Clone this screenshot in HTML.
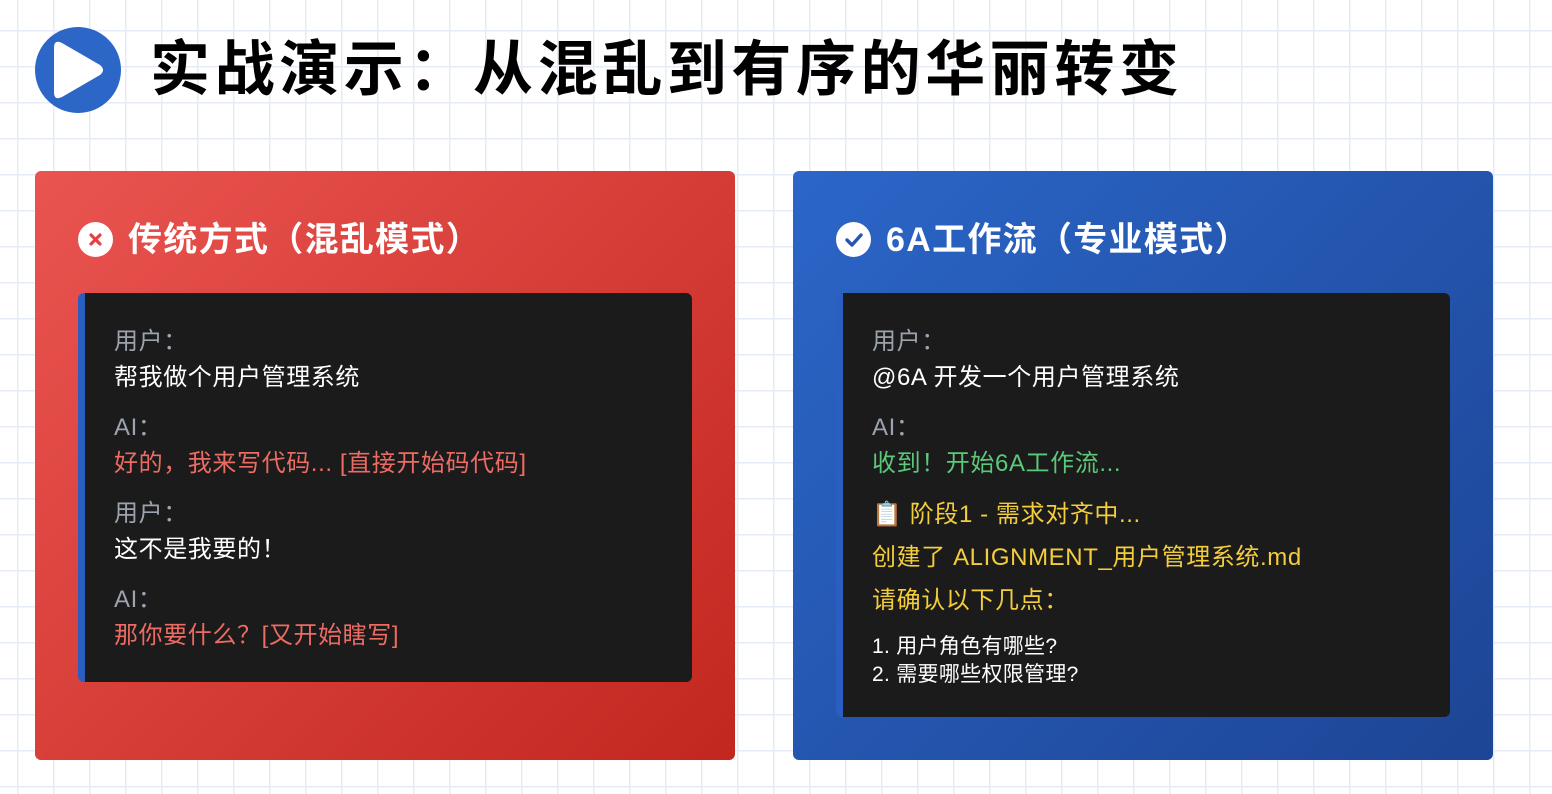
<!DOCTYPE html>
<html><head><meta charset="utf-8"><style>
*{margin:0;padding:0;box-sizing:border-box}
body{width:1552px;height:794px;overflow:hidden;position:relative;font-family:"Liberation Sans","Noto Sans CJK SC",sans-serif;
background-color:#fff;
background-image:linear-gradient(#e6ecf7 1.5px,transparent 1.5px),linear-gradient(90deg,#e6ecf7 1.5px,transparent 1.5px);
background-size:36px 36px;background-position:17px 30px}
.hicon{position:absolute;left:35px;top:27px;width:86px;height:86px;border-radius:50%;background:#2c66c6}
h1{position:absolute;left:150px;top:34px;font-size:60px;font-weight:700;line-height:72px;color:#000;letter-spacing:4.6px}
.card{position:absolute;top:171px;width:700px;height:589px;border-radius:6px}
.red{left:35px;background:linear-gradient(135deg,#ea5450,#c2271f)}
.blue{left:793px;background:linear-gradient(135deg,#2b66c8,#1d4595)}
.ct{position:absolute;font-size:34px;font-weight:700;color:#fff;line-height:44px;letter-spacing:1.3px}
.ci{position:absolute;left:43px;top:51px;width:35px;height:35px;border-radius:50%;background:#fff}
.box{position:absolute;left:43px;top:122px;width:614px;background:#1b1b1b;border-radius:6px;border-left:7px solid #2a5ec0}
.l{position:absolute;left:29px;font-size:24px;line-height:30px;white-space:nowrap;letter-spacing:0.6px}
.g{color:#9ca3af}.w{color:#fff}.r{color:#ec6b63}.gr{color:#5cc87a}.y{color:#f3cd3c}
.s{font-size:21px;color:#fff;letter-spacing:0.3px}
</style></head><body>
<div class="hicon"><svg width="86" height="86" viewBox="0 0 86 86"><path d="M65 38 L27 16 Q19 12 19 21 L19 65 Q19 74 27 70 L65 48 Q71 43 65 38Z" fill="#fff"/></svg></div>
<h1>实战演示：从混乱到有序的华丽转变</h1>

<div class="card red">
<div class="ci"><svg width="35" height="35"><path d="M13 13 L22 22 M22 13 L13 22" stroke="#e04640" stroke-width="3.2" stroke-linecap="round"/></svg></div>
<div class="ct" style="left:93px;top:47px">传统方式（混乱模式）</div>
<div class="box" style="height:389px">
<div class="l g" style="top:34px">用户：</div>
<div class="l w" style="top:70px">帮我做个用户管理系统</div>
<div class="l g" style="top:120px">AI：</div>
<div class="l r" style="top:156px">好的，我来写代码... [直接开始码代码]</div>
<div class="l g" style="top:206px">用户：</div>
<div class="l w" style="top:242px">这不是我要的！</div>
<div class="l g" style="top:292px">AI：</div>
<div class="l r" style="top:328px">那你要什么？[又开始瞎写]</div>
</div>
</div>

<div class="card blue">
<div class="ci"><svg width="35" height="35"><path d="M11 18 L16 23 L25 13" fill="none" stroke="#2456b4" stroke-width="3.4" stroke-linecap="round" stroke-linejoin="round"/></svg></div>
<div class="ct" style="left:93px;top:47px">6A工作流（专业模式）</div>
<div class="box" style="height:424px">
<div class="l g" style="top:34px">用户：</div>
<div class="l w" style="top:70px">@6A 开发一个用户管理系统</div>
<div class="l g" style="top:120px">AI：</div>
<div class="l gr" style="top:156px">收到！开始6A工作流...</div>
<div class="l y" style="top:207px">📋 阶段1 - 需求对齐中...</div>
<div class="l y" style="top:250px">创建了 ALIGNMENT_用户管理系统.md</div>
<div class="l y" style="top:293px">请确认以下几点：</div>
<div class="l s" style="top:340px;line-height:28px">1. 用户角色有哪些?<br>2. 需要哪些权限管理?</div>
</div>
</div>
</body></html>
